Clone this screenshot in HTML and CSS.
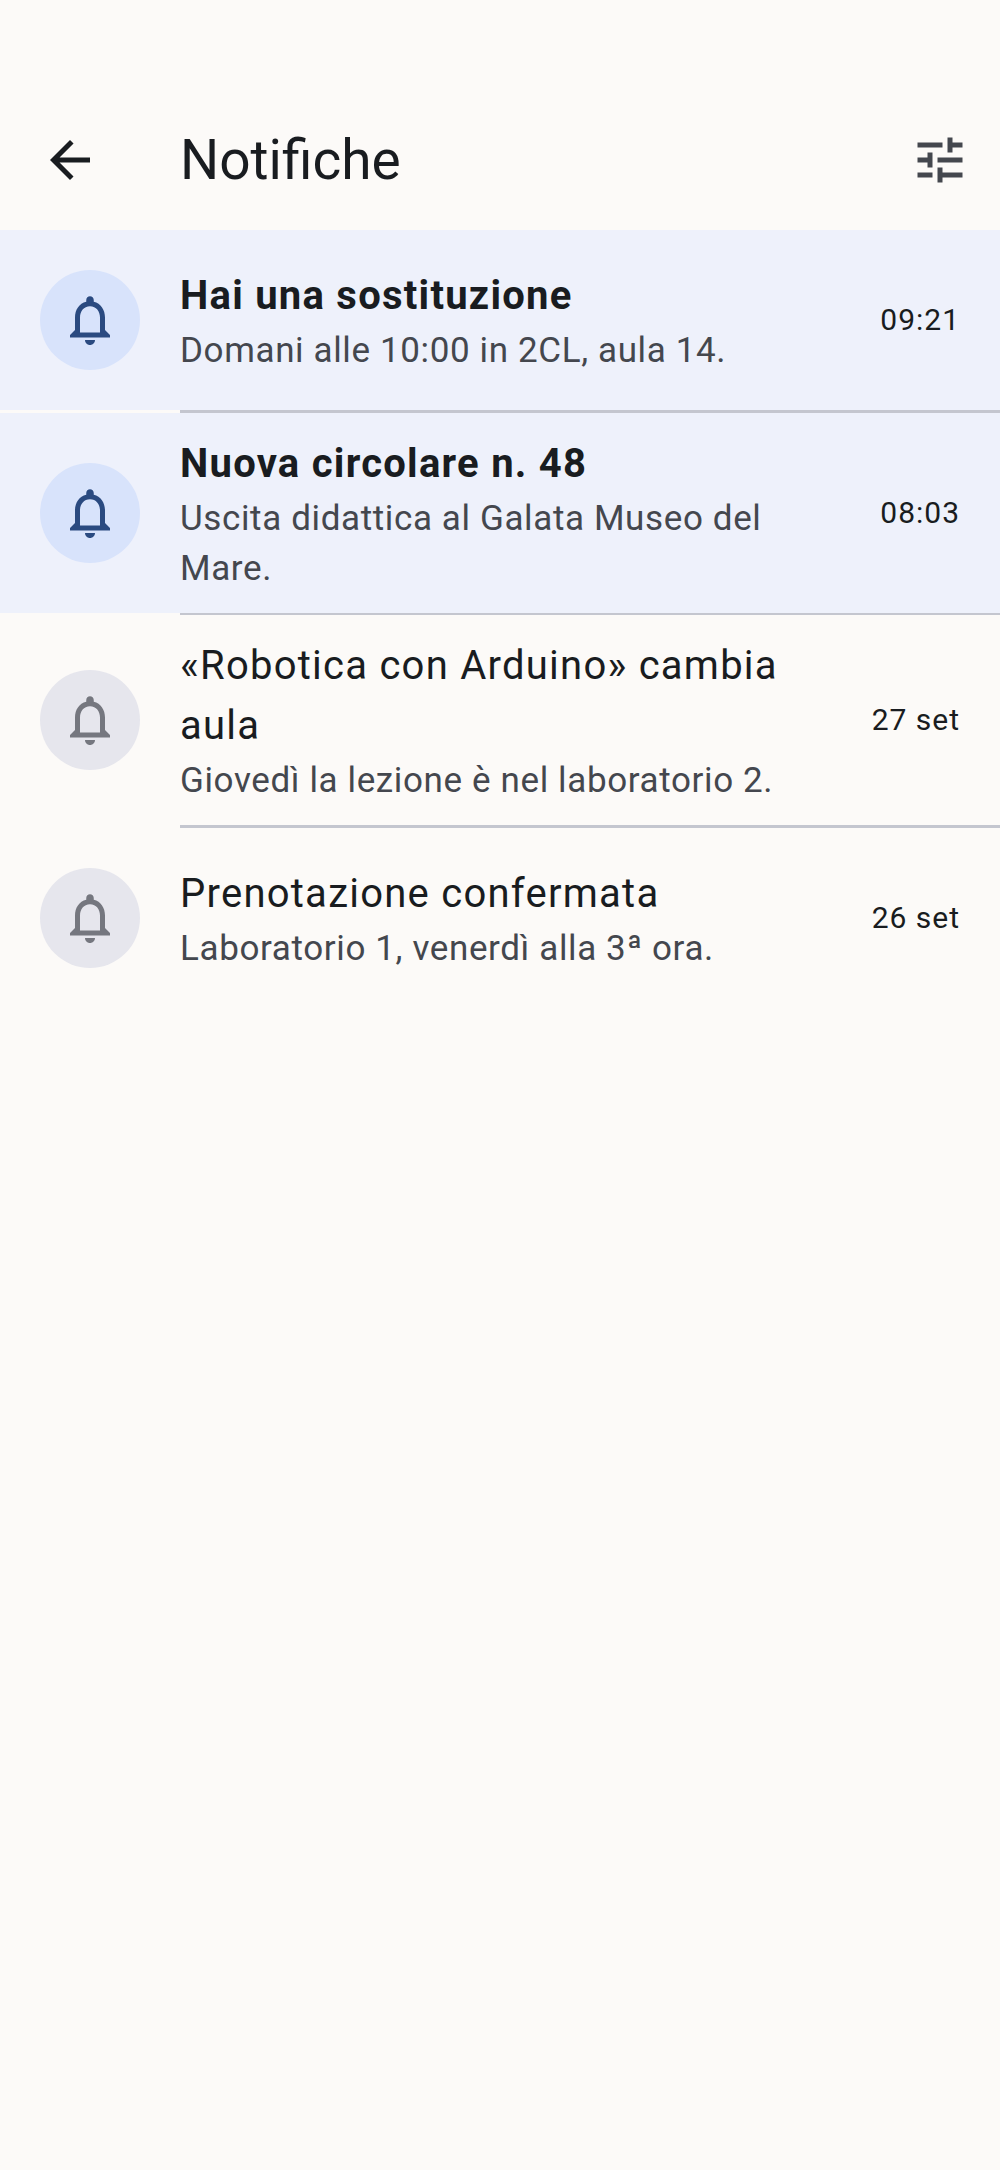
FILE: index.html
```html
<!DOCTYPE html>
<html lang="it">
<head>
    <meta charset="UTF-8">
    <meta name="viewport" content="width=device-width, initial-scale=1.0">
    <title>Notifiche</title>
    <link rel="stylesheet" href="styles.css">
</head>
<body>
    <header class="topbar">
        <svg class="back-icon" viewBox="0 0 24 24"><path d="M20 11H7.83l5.59-5.59L12 4l-8 8 8 8 1.41-1.41L7.83 13H20v-2z"/></svg>
        <h1 class="page-title">Notifiche</h1>
        <svg class="tune-icon" viewBox="0 0 24 24"><path d="M3 17v2h6v-2H3zM3 5v2h10V5H3zm10 16v-2h8v-2h-8v-2h-2v6h2zM7 9v2H3v2h4v2h2V9H7zm14 4v-2H11v2h10zm-6-4h2V7h4V5h-4V3h-2v6z"/></svg>
    </header>

    <div class="list">
        <div class="row unread">
            <div class="avatar">
                <svg class="bell" viewBox="0 0 24 24"><path d="M12 22c1.1 0 2-.9 2-2h-4c0 1.1.9 2 2 2zm6-6v-5c0-3.07-1.63-5.64-4.5-6.32V4c0-.83-.67-1.5-1.5-1.5s-1.5.67-1.5 1.5v.68C7.64 5.36 6 7.92 6 11v5l-2 2v1h16v-1l-2-2zm-2 1H8v-6c0-2.48 1.51-4.5 4-4.5s4 2.02 4 4.5v6z"/></svg>
            </div>
            <div class="text">
                <div class="headline">Hai una sostituzione</div>
                <div class="support">Domani alle 10:00 in 2CL, aula 14.</div>
            </div>
            <div class="time">09:21</div>
        </div>
        <hr class="divider">
        <div class="row unread">
            <div class="avatar">
                <svg class="bell" viewBox="0 0 24 24"><path d="M12 22c1.1 0 2-.9 2-2h-4c0 1.1.9 2 2 2zm6-6v-5c0-3.07-1.63-5.64-4.5-6.32V4c0-.83-.67-1.5-1.5-1.5s-1.5.67-1.5 1.5v.68C7.64 5.36 6 7.92 6 11v5l-2 2v1h16v-1l-2-2zm-2 1H8v-6c0-2.48 1.51-4.5 4-4.5s4 2.02 4 4.5v6z"/></svg>
            </div>
            <div class="text">
                <div class="headline">Nuova circolare n. 48</div>
                <div class="support">Uscita didattica al Galata Museo del Mare.</div>
            </div>
            <div class="time">08:03</div>
        </div>
        <hr class="divider">
        <div class="row">
            <div class="avatar">
                <svg class="bell" viewBox="0 0 24 24"><path d="M12 22c1.1 0 2-.9 2-2h-4c0 1.1.9 2 2 2zm6-6v-5c0-3.07-1.63-5.64-4.5-6.32V4c0-.83-.67-1.5-1.5-1.5s-1.5.67-1.5 1.5v.68C7.64 5.36 6 7.92 6 11v5l-2 2v1h16v-1l-2-2zm-2 1H8v-6c0-2.48 1.51-4.5 4-4.5s4 2.02 4 4.5v6z"/></svg>
            </div>
            <div class="text">
                <div class="headline">«Robotica con Arduino» cambia aula</div>
                <div class="support">Giovedì la lezione è nel laboratorio 2.</div>
            </div>
            <div class="time">27 set</div>
        </div>
        <hr class="divider">
        <div class="row">
            <div class="avatar">
                <svg class="bell" viewBox="0 0 24 24"><path d="M12 22c1.1 0 2-.9 2-2h-4c0 1.1.9 2 2 2zm6-6v-5c0-3.07-1.63-5.64-4.5-6.32V4c0-.83-.67-1.5-1.5-1.5s-1.5.67-1.5 1.5v.68C7.64 5.36 6 7.92 6 11v5l-2 2v1h16v-1l-2-2zm-2 1H8v-6c0-2.48 1.51-4.5 4-4.5s4 2.02 4 4.5v6z"/></svg>
            </div>
            <div class="text">
                <div class="headline">Prenotazione confermata</div>
                <div class="support">Laboratorio 1, venerdì alla 3ª ora.</div>
            </div>
            <div class="time">26 set</div>
        </div>
    </div>
</body>
</html>
```

FILE: styles.css
```css
body {
    margin: 0;
    min-height: 2170px;
    background-color: #fcfaf8;
    color: #191c20;
    font-family: Roboto, "Liberation Sans", sans-serif;
}

.topbar {
    display: flex;
    align-items: center;
    height: 140px;
    padding: 90px 30px 0 40px;
}

.back-icon {
    width: 60px;
    height: 60px;
    fill: #191c20;
}

.page-title {
    flex: 1;
    margin: 0 0 0 80px;
    font-size: 55px;
    font-weight: 400;
    line-height: 70px;
}

.tune-icon {
    width: 60px;
    height: 60px;
    fill: #44474e;
}

.row {
    display: flex;
    align-items: center;
    gap: 40px;
    min-height: 140px;
    padding: 20px 40px;
}

.avatar {
    display: flex;
    align-items: center;
    justify-content: center;
    flex-shrink: 0;
    width: 100px;
    height: 100px;
    border-radius: 50%;
    background-color: #e6e6ed;
}

.bell {
    width: 60px;
    height: 60px;
    fill: #75777f;
}

/* text sits 1px lower than the row centre, without making the row taller */
.text {
    flex: 1;
    padding-top: 1px;
    margin-bottom: -1px;
}

.headline {
    font-size: 40px;
    line-height: 60px;
    letter-spacing: 1.25px;
}

.support {
    font-size: 35px;
    line-height: 50px;
    letter-spacing: 0.625px;
    color: #44474e;
}

.time {
    font-size: 30px;
    line-height: 40px;
    letter-spacing: 1px;
    white-space: nowrap;
}

.unread {
    background-color: #eef1fb;
}

.unread .avatar {
    background-color: #d8e3fb;
}

.unread .bell {
    fill: #2a4a80;
}

.unread .headline {
    font-weight: 700;
}

.divider {
    height: 2.5px;
    margin: 0 0 0 180px;
    border: none;
    background-color: #c4c6cf;
}
```
